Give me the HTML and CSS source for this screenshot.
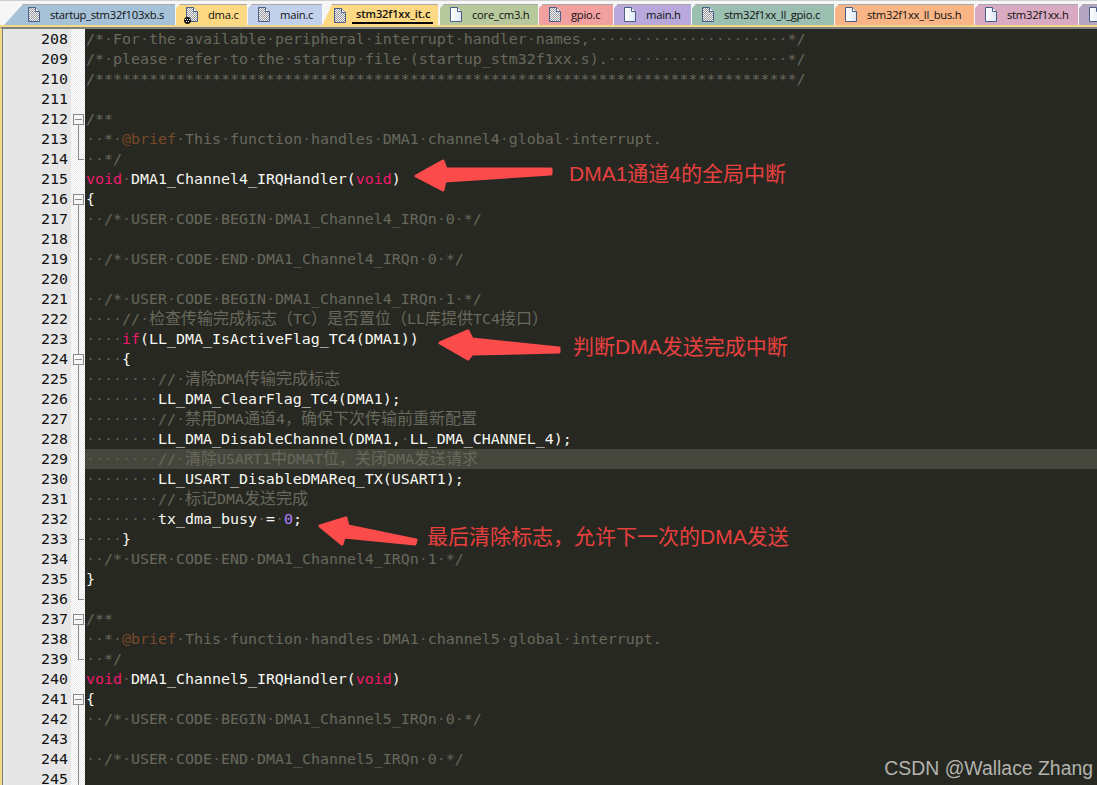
FILE: index.html
```html
<!DOCTYPE html>
<html lang="zh">
<head>
<meta charset="utf-8">
<title>stm32f1xx_it.c</title>
<link rel="stylesheet" href="styles.css">
</head>
<body>
<div class="window">
  <svg class="defs" width="0" height="0" aria-hidden="true"><defs><pattern id="dith" width="2" height="2" patternUnits="userSpaceOnUse"><rect width="2" height="2" fill="#f4f4f4"/><rect width="1" height="1" fill="#9a9aa2"/><rect x="1" y="1" width="1" height="1" fill="#9a9aa2"/></pattern><linearGradient id="white" x1="0" x2="1"><stop offset="0" stop-color="#ffffff"/><stop offset="1" stop-color="#dfe6f4"/></linearGradient></defs></svg>
  <div class="tabs">
    <div class="tab t-blue"><svg class="doc" viewBox="0 0 12 15"><path d="M.5.5h7l4 4v10h-11z" fill="url(#dith)" stroke="#4a5f88"/><path d="M7.5.5v4h4" fill="#fff" stroke="#4a5f88"/></svg><span>startup_stm32f103xb.s</span></div>
    <div class="tab t-yellow"><svg class="doc" viewBox="0 0 12 15"><path d="M.5.5h7l4 4v10h-11z" fill="url(#dith)" stroke="#4a5f88"/><path d="M7.5.5v4h4" fill="#fff" stroke="#4a5f88"/></svg><svg class="dot" viewBox="0 0 7 7"><circle cx="3.5" cy="3.5" r="3.4" fill="#111"/><path d="M1 2h1v1H1zM3 2h1v1H3zM5 2h1v1H5zM2 4h1v1H2zM4 4h1v1H4z" fill="#fff"/></svg><span>dma.c</span></div>
    <div class="tab t-lav"><svg class="doc" viewBox="0 0 12 15"><path d="M.5.5h7l4 4v10h-11z" fill="url(#dith)" stroke="#4a5f88"/><path d="M7.5.5v4h4" fill="#fff" stroke="#4a5f88"/></svg><span>main.c</span></div>
    <div class="tab t-active"><svg class="doc" viewBox="0 0 12 15"><path d="M.5.5h7l4 4v10h-11z" fill="url(#dith)" stroke="#4a5f88"/><path d="M7.5.5v4h4" fill="#fff" stroke="#4a5f88"/></svg><span class="active-label">stm32f1xx_it.c</span></div>
    <div class="tab t-green"><svg class="doc" viewBox="0 0 12 15"><path d="M.5.5h7l4 4v10h-11z" fill="url(#white)" stroke="#4a5f88"/><path d="M7.5.5v4h4" fill="#fff" stroke="#4a5f88"/></svg><span>core_cm3.h</span></div>
    <div class="tab t-red"><svg class="doc" viewBox="0 0 12 15"><path d="M.5.5h7l4 4v10h-11z" fill="url(#dith)" stroke="#4a5f88"/><path d="M7.5.5v4h4" fill="#fff" stroke="#4a5f88"/></svg><span>gpio.c</span></div>
    <div class="tab t-purple"><svg class="doc" viewBox="0 0 12 15"><path d="M.5.5h7l4 4v10h-11z" fill="url(#white)" stroke="#4a5f88"/><path d="M7.5.5v4h4" fill="#fff" stroke="#4a5f88"/></svg><span>main.h</span></div>
    <div class="tab t-teal"><svg class="doc" viewBox="0 0 12 15"><path d="M.5.5h7l4 4v10h-11z" fill="url(#dith)" stroke="#4a5f88"/><path d="M7.5.5v4h4" fill="#fff" stroke="#4a5f88"/></svg><span>stm32f1xx_ll_gpio.c</span></div>
    <div class="tab t-orange"><svg class="doc" viewBox="0 0 12 15"><path d="M.5.5h7l4 4v10h-11z" fill="url(#white)" stroke="#4a5f88"/><path d="M7.5.5v4h4" fill="#fff" stroke="#4a5f88"/></svg><span>stm32f1xx_ll_bus.h</span></div>
    <div class="tab t-pink"><svg class="doc" viewBox="0 0 12 15"><path d="M.5.5h7l4 4v10h-11z" fill="url(#white)" stroke="#4a5f88"/><path d="M7.5.5v4h4" fill="#fff" stroke="#4a5f88"/></svg><span>stm32f1xx.h</span></div>
    <div class="tab t-mauve"><svg class="doc" viewBox="0 0 12 15"><path d="M.5.5h7l4 4v10h-11z" fill="url(#white)" stroke="#4a5f88"/><path d="M7.5.5v4h4" fill="#fff" stroke="#4a5f88"/></svg></div>
  </div>
  <div class="editor">
    <div class="numbers">
      <div>208</div><div>209</div><div>210</div><div>211</div><div>212</div><div>213</div><div>214</div><div>215</div><div>216</div><div>217</div><div>218</div><div>219</div><div>220</div><div>221</div><div>222</div><div>223</div><div>224</div><div>225</div><div>226</div><div>227</div><div>228</div><div>229</div><div>230</div><div>231</div><div>232</div><div>233</div><div>234</div><div>235</div><div>236</div><div>237</div><div>238</div><div>239</div><div>240</div><div>241</div><div>242</div><div>243</div><div>244</div><div>245</div>
    </div>
    <div class="fold">
      <div class="f"></div><div class="f"></div><div class="f"></div><div class="f"></div>
      <div class="f box"></div><div class="f line"></div><div class="f end"></div><div class="f"></div>
      <div class="f box"></div><div class="f line"></div><div class="f line"></div><div class="f line"></div><div class="f line"></div><div class="f line"></div><div class="f line"></div><div class="f line"></div>
      <div class="f box through"></div><div class="f line"></div><div class="f line"></div><div class="f line"></div><div class="f line"></div><div class="f line"></div><div class="f line"></div><div class="f line"></div><div class="f line"></div>
      <div class="f tee"></div><div class="f line"></div><div class="f line"></div><div class="f end"></div>
      <div class="f box"></div><div class="f line"></div><div class="f end"></div><div class="f"></div>
      <div class="f box"></div><div class="f line"></div><div class="f line"></div><div class="f line"></div><div class="f line"></div>
    </div>
    <div class="code">
      <div class="row c">/*<i>·</i>For<i>·</i>the<i>·</i>available<i>·</i>peripheral<i>·</i>interrupt<i>·</i>handler<i>·</i>names,<i>······················</i>*/</div>
      <div class="row c">/*<i>·</i>please<i>·</i>refer<i>·</i>to<i>·</i>the<i>·</i>startup<i>·</i>file<i>·</i>(startup_stm32f1xx.s).<i>····················</i>*/</div>
      <div class="row c">/******************************************************************************/</div>
      <div class="row"></div>
      <div class="row c">/**</div>
      <div class="row c"><i>··</i>*<i>·</i><b class="tag">@brief</b><i>·</i>This<i>·</i>function<i>·</i>handles<i>·</i>DMA1<i>·</i>channel4<i>·</i>global<i>·</i>interrupt.</div>
      <div class="row c"><i>··</i>*/</div>
      <div class="row"><b class="kw">void</b><i>·</i>DMA1_Channel4_IRQHandler(<b class="kw">void</b>)</div>
      <div class="row">{</div>
      <div class="row c"><i>··</i>/*<i>·</i>USER<i>·</i>CODE<i>·</i>BEGIN<i>·</i>DMA1_Channel4_IRQn<i>·</i>0<i>·</i>*/</div>
      <div class="row"></div>
      <div class="row c"><i>··</i>/*<i>·</i>USER<i>·</i>CODE<i>·</i>END<i>·</i>DMA1_Channel4_IRQn<i>·</i>0<i>·</i>*/</div>
      <div class="row"></div>
      <div class="row c"><i>··</i>/*<i>·</i>USER<i>·</i>CODE<i>·</i>BEGIN<i>·</i>DMA1_Channel4_IRQn<i>·</i>1<i>·</i>*/</div>
      <div class="row c"><i>····</i>//<i>·</i><span class="zh">检查传输完成标志<span class="zp">（</span><span class="zl">TC</span><span class="zp">）</span>是否置位<span class="zp">（</span><span class="zl">LL</span>库提供<span class="zl">TC4</span>接口<span class="zp">）</span></span></div>
      <div class="row"><i>····</i><b class="kw">if</b>(LL_DMA_IsActiveFlag_TC4(DMA1))</div>
      <div class="row"><i>····</i>{</div>
      <div class="row c"><i>········</i>//<i>·</i><span class="zh">清除<span class="zl">DMA</span>传输完成标志</span></div>
      <div class="row"><i>········</i>LL_DMA_ClearFlag_TC4(DMA1);</div>
      <div class="row c"><i>········</i>//<i>·</i><span class="zh">禁用<span class="zl">DMA</span>通道<span class="zl">4</span><span class="zp">，</span>确保下次传输前重新配置</span></div>
      <div class="row"><i>········</i>LL_DMA_DisableChannel(DMA1,<i>·</i>LL_DMA_CHANNEL_4);</div>
      <div class="row c current"><i>········</i>//<i>·</i><span class="zh">清除<span class="zl">USART1</span>中<span class="zl">DMAT</span>位<span class="zp">，</span>关闭<span class="zl">DMA</span>发送请求</span></div>
      <div class="row"><i>········</i>LL_USART_DisableDMAReq_TX(USART1);</div>
      <div class="row c"><i>········</i>//<i>·</i><span class="zh">标记<span class="zl">DMA</span>发送完成</span></div>
      <div class="row"><i>········</i>tx_dma_busy<i>·</i>=<i>·</i><b class="num">0</b>;</div>
      <div class="row"><i>····</i>}</div>
      <div class="row c"><i>··</i>/*<i>·</i>USER<i>·</i>CODE<i>·</i>END<i>·</i>DMA1_Channel4_IRQn<i>·</i>1<i>·</i>*/</div>
      <div class="row">}</div>
      <div class="row"></div>
      <div class="row c">/**</div>
      <div class="row c"><i>··</i>*<i>·</i><b class="tag">@brief</b><i>·</i>This<i>·</i>function<i>·</i>handles<i>·</i>DMA1<i>·</i>channel5<i>·</i>global<i>·</i>interrupt.</div>
      <div class="row c"><i>··</i>*/</div>
      <div class="row"><b class="kw">void</b><i>·</i>DMA1_Channel5_IRQHandler(<b class="kw">void</b>)</div>
      <div class="row">{</div>
      <div class="row c"><i>··</i>/*<i>·</i>USER<i>·</i>CODE<i>·</i>BEGIN<i>·</i>DMA1_Channel5_IRQn<i>·</i>0<i>·</i>*/</div>
      <div class="row"></div>
      <div class="row c"><i>··</i>/*<i>·</i>USER<i>·</i>CODE<i>·</i>END<i>·</i>DMA1_Channel5_IRQn<i>·</i>0<i>·</i>*/</div>
      <div class="row"></div>
    </div>
  </div>
  <svg class="arrows" viewBox="0 0 1097 785" aria-hidden="true">
    <path d="M416 176L443 161L446 169L551 169L551 174L445 181L443 190Z"/>
    <path d="M440 343L468 331L472 339L559 348L559 352L472 354L468 359Z"/>
    <path d="M320 526L346 518L348 526L416 540L415 544L344 537L342 544Z"/>
  </svg>
  <div class="note n1">DMA1通道4的全局中断</div>
  <div class="note n2">判断DMA发送完成中断</div>
  <div class="note n3">最后清除标志，允许下一次的DMA发送</div>
  <div class="mark">CSDN @Wallace Zhang</div>
</div>
</body>
</html>
```
FILE: styles.css
```css
html, body { margin: 0; padding: 0; background: #272822; }
.window { position: relative; width: 1097px; height: 785px; overflow: hidden; background: #272822; }
.defs { position: absolute; }

.tabs { display: flex; gap: 1px; height: 21px; padding-top: 3px; background: #f6f6f6; border-top: 1px solid #cfcfcf; border-bottom: 2px solid #f3d98a; padding-left: 4px; font: 11.25px "Open Sans", sans-serif; letter-spacing: -0.27px; color: #111; }
.tab { position: relative; display: flex; align-items: center; flex: none; height: 21px; padding-left: 10px; box-sizing: border-box; white-space: nowrap; box-shadow: inset 0 1px 0 #a9a9a9; clip-path: polygon(4px 0, 100% 0, 100% 100%, 0 100%, 0 4px); }
.doc { width: 12px; height: 15px; margin-right: 10px; flex: none; }
.dot { position: absolute; left: 8px; top: 13px; width: 7px; height: 7px; }
.t-blue { width: 171px; padding-left: 24px; background: #a5c2d8; clip-path: polygon(19px 0, 100% 0, 100% 100%, 0 100%); }
.t-yellow { width: 71px; background: #fdd983; }
.t-lav { width: 74px; background: #c3d0ec; }
.t-active { width: 116px; margin-left: -1px; padding-left: 12px; height: 22px; background: #fdd983; font-size: 11px; font-weight: 600; letter-spacing: -0.1px; z-index: 1; clip-path: polygon(10px 0, 100% 0, 100% 100%, 0 100%); }
.active-label { margin-left: -4px; padding: 0 3px 0 4px; line-height: 16px; border-bottom: 2px solid #000; }
.t-green { width: 98px; margin-left: 1px; background: #b7c99c; }
.t-red { width: 74px; background: #f19f9f; }
.t-purple { width: 77px; background: #b8a8dc; }
.t-teal { width: 142px; background: #9bbfb1; }
.t-orange { width: 139px; background: #f9b586; }
.t-pink { width: 103px; background: #d9aac2; }
.t-mauve { width: 30px; background: #b4a6c0; }

.editor { display: flex; height: 758px; border-top: 2px solid #808080; border-left: 2px solid #f3d98a; box-shadow: inset 1px 0 0 #808080; }
.numbers { width: 68px; margin-left: 1px; background: #e6e6e6; font: 14.95px/20px "DejaVu Sans Mono", monospace; color: #111; text-align: right; box-sizing: border-box; padding-right: 3px; flex: none; }
.numbers div { height: 20px; }
.fold { width: 14px; flex: none; background: repeating-conic-gradient(#ffffff 0 25%, #eaeaea 0 50%) 0 0 / 2px 2px; }
.f { height: 20px; position: relative; }
.f.line::before, .f.box::after, .f.end::before, .f.tee::before { content: ""; position: absolute; left: 7px; width: 1px; background: #8a8a8a; }
.f.line::before, .f.tee::before { top: 0; bottom: 0; }
.f.box::after { top: 15px; bottom: 0; }
.f.end::before { top: 0; height: 10px; }
.f.end::after, .f.tee::after { content: ""; position: absolute; left: 7px; top: 10px; width: 6px; height: 1px; background: #8a8a8a; }
.f.box::before { content: ""; position: absolute; left: 2px; top: 5px; width: 9px; height: 9px; border: 1px solid #8a8a8a; background: linear-gradient(#8a8a8a, #8a8a8a) center / 7px 1px no-repeat #f6f6f6; }
.f.through::after { top: 0; }
.f.through::before { z-index: 1; }

.code { flex: 1; background: #272822; font: 14.95px/20px "DejaVu Sans Mono", "Noto Sans CJK SC", monospace; color: #f8f8f2; }
.row { height: 20px; padding-left: 1px; white-space: pre; }
.row i { font-style: normal; color: #5c5d52; }
.row b { font-weight: normal; }
.c { color: #68685c; }
.kw { color: #f0186c; }
.num { color: #ae81ff; }
.tag { color: #7a4a28; }
.zh { font-family: "Noto Sans CJK SC", sans-serif; font-size: 16px; line-height: 1; text-spacing-trim: space-all; }
.zl { font-family: "DejaVu Sans Mono", monospace; font-size: 14.95px; }
.zp { font-family: "Noto Sans CJK TC", sans-serif; }
.current { background: #46473c; }

.arrows { position: absolute; left: 0; top: 0; width: 1097px; height: 785px; pointer-events: none; }
.arrows path { fill: #fb4b4b; stroke: #fb4b4b; stroke-width: 3; stroke-linejoin: round; }
.note { position: absolute; font: 21px/28px "Liberation Sans", "Noto Sans CJK SC", sans-serif; color: #e8403e; white-space: nowrap; }
.n1 { left: 569px; top: 160px; }
.n2 { left: 573px; top: 333px; }
.n3 { left: 427px; top: 523px; }
.mark { position: absolute; right: 4px; bottom: 5px; font: 19.4px/24px "Liberation Sans", sans-serif; color: #b3b3ad; }
```
